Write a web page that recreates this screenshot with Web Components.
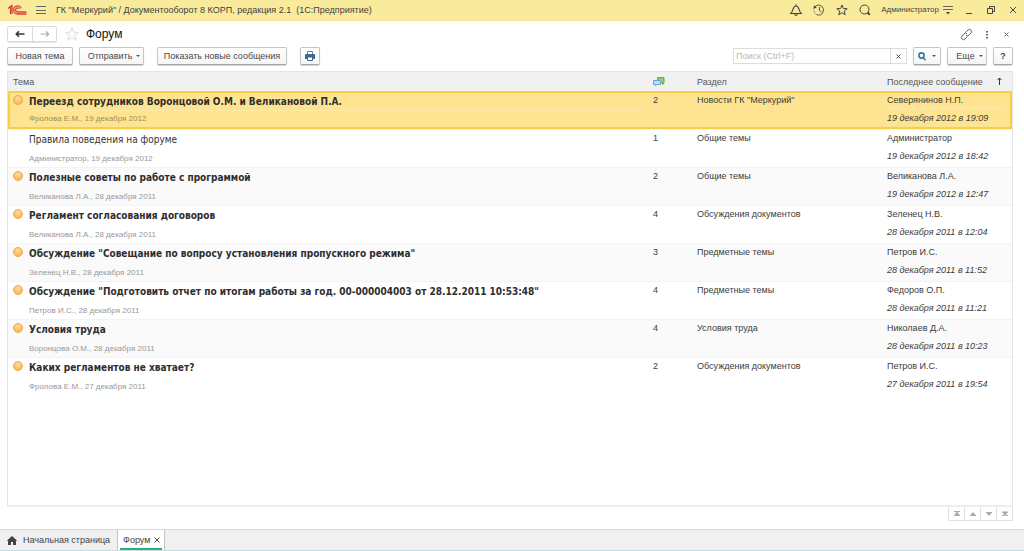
<!DOCTYPE html>
<html lang="ru">
<head>
<meta charset="utf-8">
<title>Форум</title>
<style>
  html, body { margin: 0; height: 100%; }
  body { font: 9px/12px "Liberation Sans", Arial, sans-serif; color: #3c3c3c; background: #fff; }
</style>
</head>
<body>
<forum-app></forum-app>

<script>
const base = `
  * { box-sizing: border-box; }
  svg { display: block; flex: none; }
  button { font: inherit; color: inherit; margin: 0; cursor: pointer; }
  .plain { border: 0; background: none; padding: 0; display: grid; place-items: center; }
`;

function define(name, css, html, setup) {
  const tpl = document.createElement('template');
  tpl.innerHTML = `<style>${base}${css}</style>${html}`;
  customElements.define(name, class extends HTMLElement {
    constructor() {
      super();
      this.attachShadow({ mode: 'open' }).append(tpl.content.cloneNode(true));
    }
    connectedCallback() { if (setup) setup(this, this.shadowRoot); }
  });
}

/* Raised command button; the "menu" attribute adds the drop-down mark. */
define('cmd-button', `
  :host { display: block; }
  button { height: 18px; width: 100%; padding: 0 9px; display: flex; align-items: center; justify-content: center; gap: 6px;
    border: 1px solid #c4c4c4; border-bottom-color: #a4a4a4; border-radius: 2px; background: linear-gradient(#fff, #f5f5f5);
    box-shadow: 0 1px 1px #d4d4d4; color: #4a4a4a; white-space: nowrap; }
  i { display: none; border: 2px solid transparent; border-top-color: #555; border-bottom: 0; }
  :host([menu]) i { display: block; }
  :host([menu]) button { padding-right: 4px; gap: 4px; }
  :host([icon]) button { padding: 0 4px; }
  :host([menu][icon]) button { gap: 6px; }
`, `<button type="button"><slot></slot><i></i></button>`, (el, root) => {
  const label = el.getAttribute('label');
  if (label) root.querySelector('button').setAttribute('aria-label', label);
});

define('title-bar', `
  :host { display: flex; align-items: center; height: 21px; padding: 0 4px 0 7px; background: #f9eb9c; border-bottom: 1px solid #f3e394; color: #444; }
  .logo { margin-right: 9px; }
  h1 { font: inherit; margin: 0 auto 0 10px; white-space: pre; color: #3f3f3f; }
  .tools { display: flex; align-items: center; gap: 9px; }
  .account { display: flex; align-items: center; gap: 4px; }
  .user { font-size: 8px; color: #444; text-decoration: none; }
  .win { display: flex; gap: 8px; }
`, `
  <svg class="logo" width="20" height="12" viewBox="0 0 20 12" fill="none" stroke="#dc4038" stroke-width="1.3">
    <path d="M1 4.5 3.5 2.5V10M5 10V1.5L2.5 2.8"/>
    <path d="M14.2 4.2A4 4 0 1 0 10.5 10H19.5"/>
    <path d="M12.2 4.9A2 2 0 1 0 10.7 8H19.5"/>
  </svg>
  <button class="plain" type="button" aria-label="Меню"><svg width="10" height="10" viewBox="0 0 10 10" stroke="#666" stroke-width="1"><path d="M0 1.5h10M0 5.5h10M0 8.5h10"/></svg></button>
  <h1>ГК "Меркурий" / Документооборот 8 КОРП, редакция 2.1  (1С:Предприятие)</h1>
  <div class="tools">
    <button class="plain" type="button" aria-label="Оповещения"><svg width="14" height="14" viewBox="0 0 14 14" fill="none" stroke="#444" stroke-width="1.1"><path d="M1.800 10.500C4.600 8.500 3.200 3 7 3S9.400 8.500 12.200 10.500ZM7 3V1.200M5.500 11Q7 14 8.500 11"/></svg></button>
    <button class="plain" type="button" aria-label="История"><svg width="14" height="14" viewBox="0 0 14 14" fill="none" stroke="#555" stroke-width="1"><path d="M3 3.500A5 5 0 1 1 5 11.800"/><path d="M7.500 4V7.500L9.500 9"/><path d="M1.200 6l1-3.500 2.500 2Z" fill="#444" stroke="none"/><path d="M2 7.500q.5 3 3 4.300" stroke-dasharray="1 1"/></svg></button>
    <button class="plain" type="button" aria-label="Избранное"><svg width="14" height="14" viewBox="0 0 14 14" fill="none" stroke="#444" stroke-width="1"><path d="M7 2l1.400 3.500 3.800.2-3 2.400 1 3.700L7 9.700l-3.200 2.100 1-3.700-3-2.400 3.800-.2Z"/></svg></button>
    <button class="plain" type="button" aria-label="Поиск"><svg width="14" height="14" viewBox="0 0 14 14" fill="none" stroke="#444"><circle cx="6.500" cy="6.500" r="4.500"/><path d="M9.500 9.500l2.300 2.300" stroke-width="2"/></svg></button>
    <div class="account">
      <a class="user" href="#user">Администратор</a>
      <button class="plain" type="button" aria-label="Настройки"><svg width="10" height="10" viewBox="0 0 10 10"><path d="M0 1.500h10M0 4.500h10" stroke="#666"/><path d="M3 7h4L5 9.500Z" fill="#444"/></svg></button>
    </div>
    <div class="win">
      <button class="plain" type="button" aria-label="Свернуть"><svg width="14" height="12" viewBox="0 0 14 12"><path d="M4 9.500h6" stroke="#444"/></svg></button>
      <button class="plain" type="button" aria-label="Развернуть"><svg width="14" height="12" viewBox="0 0 14 12" fill="none" stroke="#444"><path d="M3.500 4.500h5v5h-5ZM5.500 4V2.500h5v5H9"/></svg></button>
      <button class="plain" type="button" aria-label="Закрыть"><svg width="14" height="12" viewBox="0 0 14 12" stroke="#444"><path d="M4 3l6 6M10 3l-6 6"/></svg></button>
    </div>
  </div>
`);

define('page-head', `
  :host { display: flex; align-items: center; padding: 5px 11px 0 7px; }
  .nav { display: flex; height: 16px; border: 1px solid #dcdcdc; border-radius: 2px; box-shadow: 0 1px 0 #e4e4e4; }
  .nav button { width: 24px; }
  .nav button + button { border-left: 1px solid #dcdcdc; }
  .star { margin: 0 6px 0 7px; }
  h2 { font: 12px/16px "Liberation Sans", Arial, sans-serif; color: #111; margin: 0 auto 0 0; }
  .acts { display: flex; gap: 7px; }
`, `
  <div class="nav">
    <button class="plain" type="button" aria-label="Назад"><svg width="10" height="8" viewBox="0 0 10 8" fill="none" stroke="#333" stroke-width="1.600"><path d="M9.500 4H1.500M4 1.300 1.300 4 4 6.700"/></svg></button>
    <button class="plain" type="button" aria-label="Вперед"><svg width="10" height="8" viewBox="0 0 10 8" fill="none" stroke="#aaa" stroke-width="1.200"><path d="M.500 4h8M6 1.300 8.700 4 6 6.700"/></svg></button>
  </div>
  <button class="plain star" type="button" aria-label="Добавить в избранное"><svg width="16" height="16" viewBox="0 0 16 16" fill="#fff" stroke="#dcdcdc"><path d="M8 1.500l1.700 4.700 5 .1-4 3 1.500 4.900L8 11.300l-4.200 2.900 1.500-4.900-4-3 5-.1Z"/></svg></button>
  <h2>Форум</h2>
  <div class="acts">
    <button class="plain" type="button" aria-label="Ссылка"><svg width="13" height="13" viewBox="0 0 13 13" fill="none" stroke="#666"><path d="M5.500 4.500 8 2a2.100 2.100 0 0 1 3 3L9 7.200a2 2 0 0 1-3 0M7.500 8.500 5 11a2.100 2.100 0 0 1-3-3l2-2.200a2 2 0 0 1 3 0"/></svg></button>
    <button class="plain" type="button" aria-label="Еще действия"><svg width="13" height="13" viewBox="0 0 13 13" fill="#666"><path d="M6 3h2v1.500H6ZM6 6h2v1.500H6ZM6 9h2v1.500H6Z"/></svg></button>
    <button class="plain" type="button" aria-label="Закрыть форму"><svg width="13" height="13" viewBox="0 0 13 13" stroke="#666"><path d="M4.500 4.500l4 4M8.500 4.500l-4 4"/></svg></button>
  </div>
`);

define('command-bar', `
  :host { display: flex; align-items: center; gap: 6px; padding: 5px 11px 6px 7px; }
  .new { width: 66px; } .send { width: 65px; } .show { width: 130px; margin: 0 7px; } .print { width: 20px; }
  .search { display: flex; width: 174px; height: 16px; margin-left: auto; border: 1px solid #ddd; }
  input { flex: 1; min-width: 0; border: 0; outline: 0; padding: 0 2px; font: inherit; color: #333; background: none; }
  input::placeholder { color: #bbb; opacity: 1; }
  .search button { width: 16px; border-left: 1px solid #ddd; }
  .find { width: 28px; } .more { width: 40px; } .help { width: 20px; }
`, `
  <cmd-button class="new">Новая тема</cmd-button>
  <cmd-button class="send" menu>Отправить</cmd-button>
  <cmd-button class="show">Показать новые сообщения</cmd-button>
  <cmd-button class="print" icon label="Печать"><svg width="10" height="10" viewBox="0 0 10 10"><path d="M2.500.500h5v3h-5Z" fill="#fff" stroke="#5f86a8"/><path d="M0 4Q0 3 1 3H9q1 0 1 1V8H0Z" fill="#41698f"/><path d="M2.500 6h5v3.500h-5Z" fill="#fff" stroke="#41698f"/></svg></cmd-button>
  <div class="search">
    <input type="text" aria-label="Поиск" placeholder="Поиск (Ctrl+F)">
    <button class="plain" type="button" aria-label="Очистить"><svg width="5" height="5" viewBox="0 0 5 5" stroke="#555"><path d="M.500.500l4 4M4.500.500l-4 4"/></svg></button>
  </div>
  <cmd-button class="find" menu icon label="Найти"><svg width="8" height="9" viewBox="0 0 8 9" fill="none" stroke="#2f78a8" stroke-width="1.600"><circle cx="3.500" cy="3.500" r="2.600"/><path d="M5.200 5.700 7.500 8.300"/></svg></cmd-button>
  <cmd-button class="more" menu>Еще</cmd-button>
  <cmd-button class="help" icon><b>?</b></cmd-button>
`);

const topics = [
  ['Переезд сотрудников Воронцовой О.М. и Великановой П.А.', 'Фролова Е.М., 19 декабря 2012', 2, 'Новости ГК "Меркурий"', 'Северянинов Н.П.', '19 декабря 2012 в 19:09'],
  ['Правила поведения на форуме', 'Администратор, 19 декабря 2012', 1, 'Общие темы', 'Администратор', '19 декабря 2012 в 18:42'],
  ['Полезные советы по работе с программой', 'Великанова Л.А., 28 декабря 2011', 2, 'Общие темы', 'Великанова Л.А.', '19 декабря 2012 в 12:47'],
  ['Регламент согласования договоров', 'Великанова Л.А., 28 декабря 2011', 4, 'Обсуждения документов', 'Зеленец Н.В.', '28 декабря 2011 в 12:04'],
  ['Обсуждение "Совещание по вопросу установления пропускного режима"', 'Зеленец Н.В., 28 декабря 2011', 3, 'Предметные темы', 'Петров И.С.', '28 декабря 2011 в 11:52'],
  ['Обсуждение "Подготовить отчет по итогам работы за год. 00-000004003 от 28.12.2011 10:53:48"', 'Петров И.С., 28 декабря 2011', 4, 'Предметные темы', 'Федоров О.П.', '28 декабря 2011 в 11:21'],
  ['Условия труда', 'Воронцова О.М., 28 декабря 2011', 4, 'Условия труда', 'Николаев Д.А.', '28 декабря 2011 в 10:23'],
  ['Каких регламентов не хватает?', 'Фролова Е.М., 27 декабря 2011', 2, 'Обсуждения документов', 'Петров И.С.', '27 декабря 2011 в 19:54'],
];

define('topic-list', `
  :host { display: flex; flex-direction: column; flex: 1; min-height: 0; margin: 0 11px 8px 7px; }
  .frame { flex: 1; border: 1px solid #e4e4e4; border-bottom: 2px solid #eee; }
  table { width: 100%; table-layout: fixed; border-collapse: separate; border-spacing: 0; }
  th { height: 19px; padding: 0 5px; background: #f1f1f1; font-weight: normal; text-align: left; color: #555; }
  th .last { display: flex; justify-content: space-between; padding-right: 4px; }
  .c-count { width: 44px; } .c-section { width: 190px; } .c-last { width: 130px; }
  td { height: 38px; padding: 0 5px; vertical-align: top; border-top: 1px solid #f3f3f3; line-height: 17px; white-space: nowrap; }
  tr:nth-child(odd) td { background: #fafafa; }
  .topic { display: grid; grid-template-columns: 16px 1fr; grid-template-rows: 19px 18px; align-items: center; }
  .mark { width: 10px; height: 10px; border-radius: 50%; background: radial-gradient(circle at 50% 30%, #ffdca4, #ffb850 75%); border: 1px solid #f2a84c; align-self: start; margin-top: 3px; }
  .name { grid-column: 2; font: 10px/19px "DejaVu Sans Condensed", Tahoma, sans-serif; color: #333; }
  .unread .name { font-weight: bold; color: #2e2e2e; }
  .by { grid-column: 2; font-size: 8px; line-height: 17px; color: #999; }
  em { display: block; line-height: 19px; }
  /* The selected row swaps one pixel of each line for its thicker frame. */
  tbody tr.current td { background: #fee491; border-top: 2px solid #f6cf45; border-bottom: 2px solid #f6cf45; line-height: 15px; }
  tbody tr.current td:first-child { border-left: 2px solid #f6cf45; padding-left: 3px; }
  tbody tr.current td:last-child { border-right: 2px solid #f6cf45; }
  .current .topic { grid-template-rows: 17px 17px; }
  .current .mark { margin-top: 2px; }
  .current .name { line-height: 17px; }
  .current .by { color: #a08f5c; border-top: 1px solid #fdeaa6; line-height: 16px; }
  .current em { border-top: 1px solid #fdeaa6; line-height: 18px; }
  .pager { display: flex; align-self: flex-end; }
  .pager button { width: 16px; height: 14px; border: 1px solid #e2e2e2; border-top: 0; border-left-width: 0; }
  .pager button:first-child { width: 17px; border-left-width: 1px; }
`, `
  <div class="frame"><table>
    <colgroup><col><col class="c-count"><col class="c-section"><col class="c-last"></colgroup>
    <thead><tr>
      <th scope="col">Тема</th>
      <th scope="col" aria-label="Сообщения"><svg width="12" height="10" viewBox="0 0 12 10"><path d="M4.500.500h6.500v5.500l-1.500 1.500V6h-5Z" fill="#8fce66" stroke="#68aa44"/><path d="M.500 3.500h7v4H4L2.500 9V7.500h-2Z" fill="#b9dcf5" stroke="#6aa6cf"/></svg></th>
      <th scope="col">Раздел</th>
      <th scope="col"><div class="last">Последнее сообщение<svg width="7" height="10" viewBox="0 0 7 10" fill="none" stroke="#333"><path d="M3.500 9V2M1.500 4l2-2 2 2"/></svg></div></th>
    </tr></thead>
    <tbody></tbody>
  </table></div>
  <div class="pager">
    <button class="plain" type="button" aria-label="В начало"><svg width="8" height="6" viewBox="0 0 8 6" fill="#aaa"><path d="M1 0h6v1H1ZM4 .500l3.500 4.500h-7Z"/></svg></button>
    <button class="plain" type="button" aria-label="Вверх"><svg width="8" height="6" viewBox="0 0 8 6" fill="#aaa"><path d="M4 1l3.500 4h-7Z"/></svg></button>
    <button class="plain" type="button" aria-label="Вниз"><svg width="8" height="6" viewBox="0 0 8 6" fill="#aaa"><path d="M4 5l3.500-4h-7Z"/></svg></button>
    <button class="plain" type="button" aria-label="В конец"><svg width="8" height="6" viewBox="0 0 8 6" fill="#aaa"><path d="M1 4h6v1H1ZM4 5l3.500-4.500h-7Z"/></svg></button>
  </div>
`, (el, root) => {
  root.querySelector('tbody').innerHTML = topics.map(([name, by, count, section, who, when], i) => `
    <tr class="${i === 0 ? 'current ' : ''}${i === 1 ? '' : 'unread'}">
      <td><div class="topic">${i === 1 ? '' : '<span class="mark"></span>'}<div class="name">${name}</div><div class="by">${by}</div></div></td>
      <td>${count}</td><td>${section}</td><td><div>${who}</div><em>${when}</em></td>
    </tr>`).join('');
});

define('tab-bar', `
  :host { display: flex; height: 22px; background: #f0f0f0; border-top: 1px solid #d9d9d9; border-bottom: 1px solid #c9dbe5; }
  a { display: flex; align-items: center; gap: 6px; padding: 0 7px; color: #444; text-decoration: none; white-space: nowrap; }
  .tab { display: flex; align-items: center; gap: 4px; padding: 0 4px; border: 1px solid #c4c4c4; border-width: 0 1px;
    background: linear-gradient(#2fae72, #2fae72) center bottom / calc(100% - 4px) 2px no-repeat #fff; }
  .tab a { padding: 0 0 0 1px; }
`, `
  <a href="#home"><svg width="10" height="9" viewBox="0 0 10 9" fill="#444"><path d="M5 0l5 4.500-1 .5V9H6V6H4v3H1V5L0 4.500Z"/></svg>Начальная страница</a>
  <div class="tab"><a href="#forum" aria-current="page">Форум</a><button class="plain" type="button" aria-label="Закрыть вкладку"><svg width="6" height="6" viewBox="0 0 6 6" stroke="#555"><path d="M.500.500l5 5M5.500.500l-5 5"/></svg></button></div>
`);

define('forum-app', `
  :host { display: flex; flex-direction: column; min-height: 100vh; }
`, `<title-bar></title-bar><page-head></page-head><command-bar></command-bar><topic-list></topic-list><tab-bar></tab-bar>`);
</script>
</body>
</html>
